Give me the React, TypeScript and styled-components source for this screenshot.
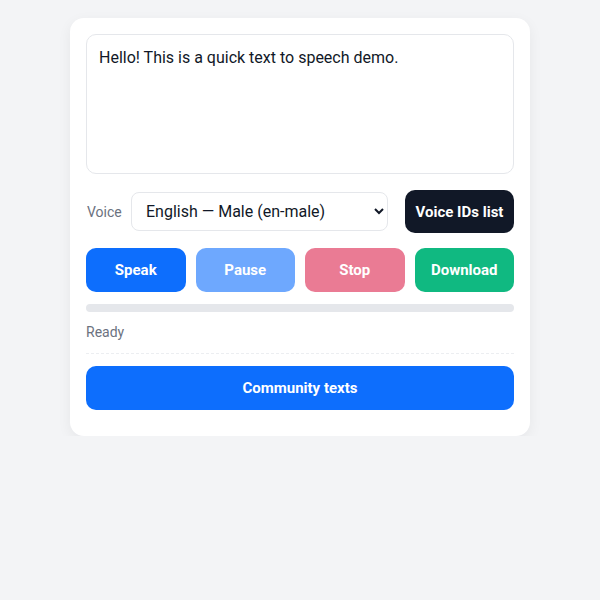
import React from "react";
import styled, { createGlobalStyle } from "styled-components";

const Global = createGlobalStyle`
  html, body { margin: 0; padding: 0; background: #f3f4f6; }
  body { font-family: Roboto, "Liberation Sans", sans-serif; }
  * { box-sizing: border-box; }
`;

const Page = styled.div`
  display: flex;
  justify-content: center;
  padding-top: 18px;
`;

const Card = styled.div`
  width: 460px;
  background: #ffffff;
  border-radius: 14px;
  box-shadow: 0 4px 14px rgba(17, 24, 39, 0.06);
  padding: 16px 16px 26px;
  display: flex;
  flex-direction: column;
`;

const TextArea = styled.textarea`
  width: 100%;
  height: 140px;
  border: 1px solid #e5e7eb;
  border-radius: 10px;
  padding: 12px;
  font-family: Roboto, "Liberation Sans", sans-serif;
  font-size: 16px;
  line-height: 22px;
  color: #111827;
  resize: none;
  outline: none;
`;

const VoiceRow = styled.div`
  display: flex;
  align-items: center;
  margin-top: 16px;
`;

const Label = styled.label`
  font-size: 14px;
  color: #6b7280;
  width: 45px;
  padding-left: 1px;
`;

const Select = styled.select`
  width: 257px;
  height: 39px;
  border: 1px solid #e5e7eb;
  border-radius: 8px;
  background: #fff;
  padding: 0 8px 0 10px;
  font-family: Roboto, "Liberation Sans", sans-serif;
  font-size: 16px;
  color: #111827;
  outline: none;
`;

const Spacer = styled.div`
  flex: 1;
`;

const Button = styled.button<{ $bg: string }>`
  border: none;
  border-radius: 10px;
  background: ${(p) => p.$bg};
  color: #ffffff;
  font-family: Roboto, "Liberation Sans", sans-serif;
  font-weight: 700;
  font-size: 15px;
  height: 44px;
  cursor: pointer;
`;

const IdsButton = styled(Button)`
  width: 109px;
  height: 43px;
  padding: 0;
`;

const ButtonGrid = styled.div`
  display: grid;
  grid-template-columns: repeat(4, 1fr);
  gap: 10px;
  margin-top: 15px;
`;

const Progress = styled.div`
  height: 8px;
  border-radius: 4px;
  background: #e5e7eb;
  margin-top: 12px;
  overflow: hidden;
`;

const Status = styled.div`
  font-size: 14px;
  color: #6b7280;
  margin-top: 11px;
  line-height: 18px;
`;

const Divider = styled.hr`
  border: none;
  border-top: 1px dashed #eceef1;
  margin: 12px 0 12px;
`;

const WideButton = styled(Button)`
  width: 100%;
`;

export default function App() {
  return (
    <>
      <Global />
      <Page>
        <Card>
          <TextArea defaultValue="Hello! This is a quick text to speech demo." />
          <VoiceRow>
            <Label>Voice</Label>
            <Select defaultValue="en-male">
              <option value="en-male">English — Male (en-male)</option>
              <option value="en-female">English — Female (en-female)</option>
            </Select>
            <Spacer />
            <IdsButton $bg="#111827">Voice IDs list</IdsButton>
          </VoiceRow>
          <ButtonGrid>
            <Button $bg="#0d6efd">Speak</Button>
            <Button $bg="#6ea8fe">Pause</Button>
            <Button $bg="#ea7b94">Stop</Button>
            <Button $bg="#10b981">Download</Button>
          </ButtonGrid>
          <Progress />
          <Status>Ready</Status>
          <Divider />
          <WideButton $bg="#0d6efd">Community texts</WideButton>
        </Card>
      </Page>
    </>
  );
}
